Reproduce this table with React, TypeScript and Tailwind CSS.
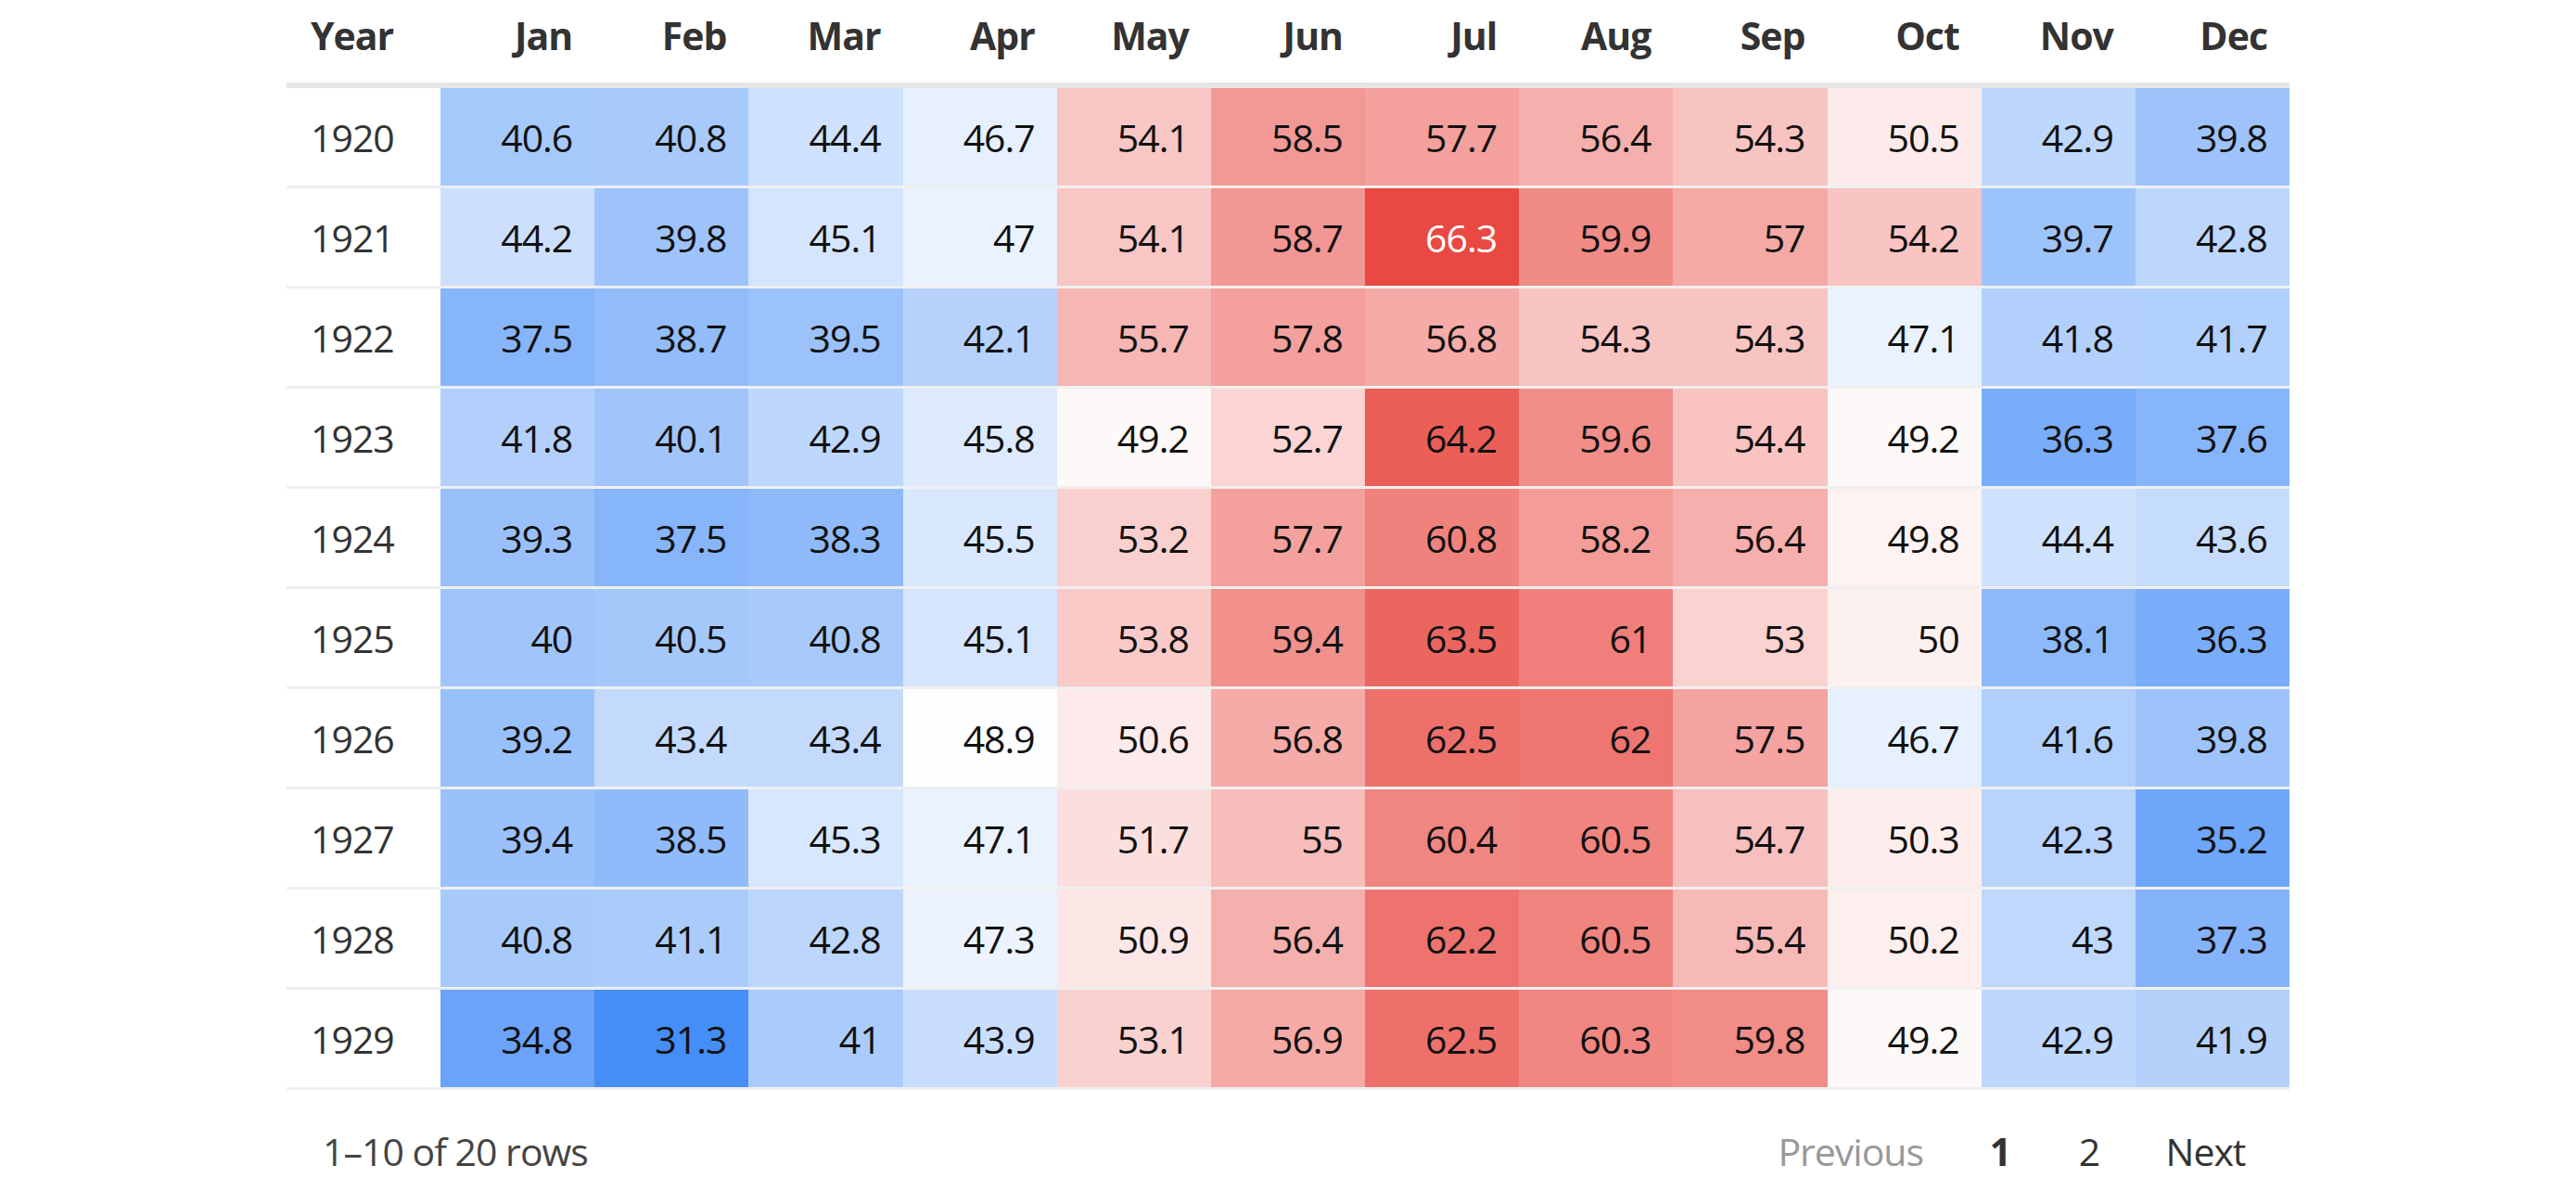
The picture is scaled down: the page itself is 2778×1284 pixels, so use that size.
import React from "react";

const MONTHS = ["Jan", "Feb", "Mar", "Apr", "May", "Jun", "Jul", "Aug", "Sep", "Oct", "Nov", "Dec"];

const DATA: [number, number[]][] = [
  [1920, [40.6, 40.8, 44.4, 46.7, 54.1, 58.5, 57.7, 56.4, 54.3, 50.5, 42.9, 39.8]],
  [1921, [44.2, 39.8, 45.1, 47, 54.1, 58.7, 66.3, 59.9, 57, 54.2, 39.7, 42.8]],
  [1922, [37.5, 38.7, 39.5, 42.1, 55.7, 57.8, 56.8, 54.3, 54.3, 47.1, 41.8, 41.7]],
  [1923, [41.8, 40.1, 42.9, 45.8, 49.2, 52.7, 64.2, 59.6, 54.4, 49.2, 36.3, 37.6]],
  [1924, [39.3, 37.5, 38.3, 45.5, 53.2, 57.7, 60.8, 58.2, 56.4, 49.8, 44.4, 43.6]],
  [1925, [40, 40.5, 40.8, 45.1, 53.8, 59.4, 63.5, 61, 53, 50, 38.1, 36.3]],
  [1926, [39.2, 43.4, 43.4, 48.9, 50.6, 56.8, 62.5, 62, 57.5, 46.7, 41.6, 39.8]],
  [1927, [39.4, 38.5, 45.3, 47.1, 51.7, 55, 60.4, 60.5, 54.7, 50.3, 42.3, 35.2]],
  [1928, [40.8, 41.1, 42.8, 47.3, 50.9, 56.4, 62.2, 60.5, 55.4, 50.2, 43, 37.3]],
  [1929, [34.8, 31.3, 41, 43.9, 53.1, 56.9, 62.5, 60.3, 59.8, 49.2, 42.9, 41.9]],
];

function lerp(a: number, b: number, t: number) {
  return Math.round(a + (b - a) * t);
}

function cellColor(v: number): string {
  if (v <= 49.1) {
    const t = Math.max(0, Math.min(1, (49.1 - v) / (49.1 - 31.3)));
    return `rgb(${lerp(255, 69, t)}, ${lerp(255, 141, t)}, ${lerp(255, 247, t)})`;
  }
  const t = Math.max(0, Math.min(1, (v - 48.6) / (66.3 - 48.6)));
  return `rgb(${lerp(255, 233, t)}, ${lerp(255, 73, t)}, ${lerp(255, 66, t)})`;
}

export default function App() {
  return (
    <div className="min-h-[1284px] w-full bg-white font-['Open_Sans','Noto_Sans',sans-serif] text-[41px] tracking-[-1px] text-[#333]">
      <div className="mx-auto w-[2160px]">
        {/* header */}
        <div className="grid grid-cols-13 border-b-[6px] border-[#e6e6e6]">
          <div className="h-[89px] px-[26px] pt-[12px] text-left font-bold leading-[52px] text-[#333]">Year</div>
          {MONTHS.map((m) => (
            <div key={m} className="h-[89px] px-[24px] pt-[12px] text-right font-bold leading-[52px] text-[#333]">
              {m}
            </div>
          ))}
        </div>
        {/* body */}
        {DATA.map(([year, vals]) => (
          <div key={year} className="grid grid-cols-13 border-b-[3px] border-[#efefef]">
            <div className="flex h-[105px] items-center px-[26px] leading-[52px] text-[#333]">{year}</div>
            {vals.map((v, i) => (
              <div
                key={i}
                className={`flex h-[105px] items-center justify-end px-[24px] leading-[52px] ${v > 65 ? "text-white" : "text-[#111]"}`}
                style={{ backgroundColor: cellColor(v) }}
              >
                {v}
              </div>
            ))}
          </div>
        ))}
        {/* pagination */}
        <div className="mt-[40px] flex items-center justify-between leading-[52px]">
          <div className="pl-[39px] text-[#444]">1–10 of 20 rows</div>
          <div className="flex items-center pr-[13px]">
            <div className="w-[230px] pr-[35px] text-right text-[#999]">Previous</div>
            <div className="w-[96px] text-center font-bold text-[#333]">1</div>
            <div className="w-[96px] text-center text-[#333]">2</div>
            <div className="w-[155px] text-center text-[#333]">Next</div>
          </div>
        </div>
      </div>
    </div>
  );
}
